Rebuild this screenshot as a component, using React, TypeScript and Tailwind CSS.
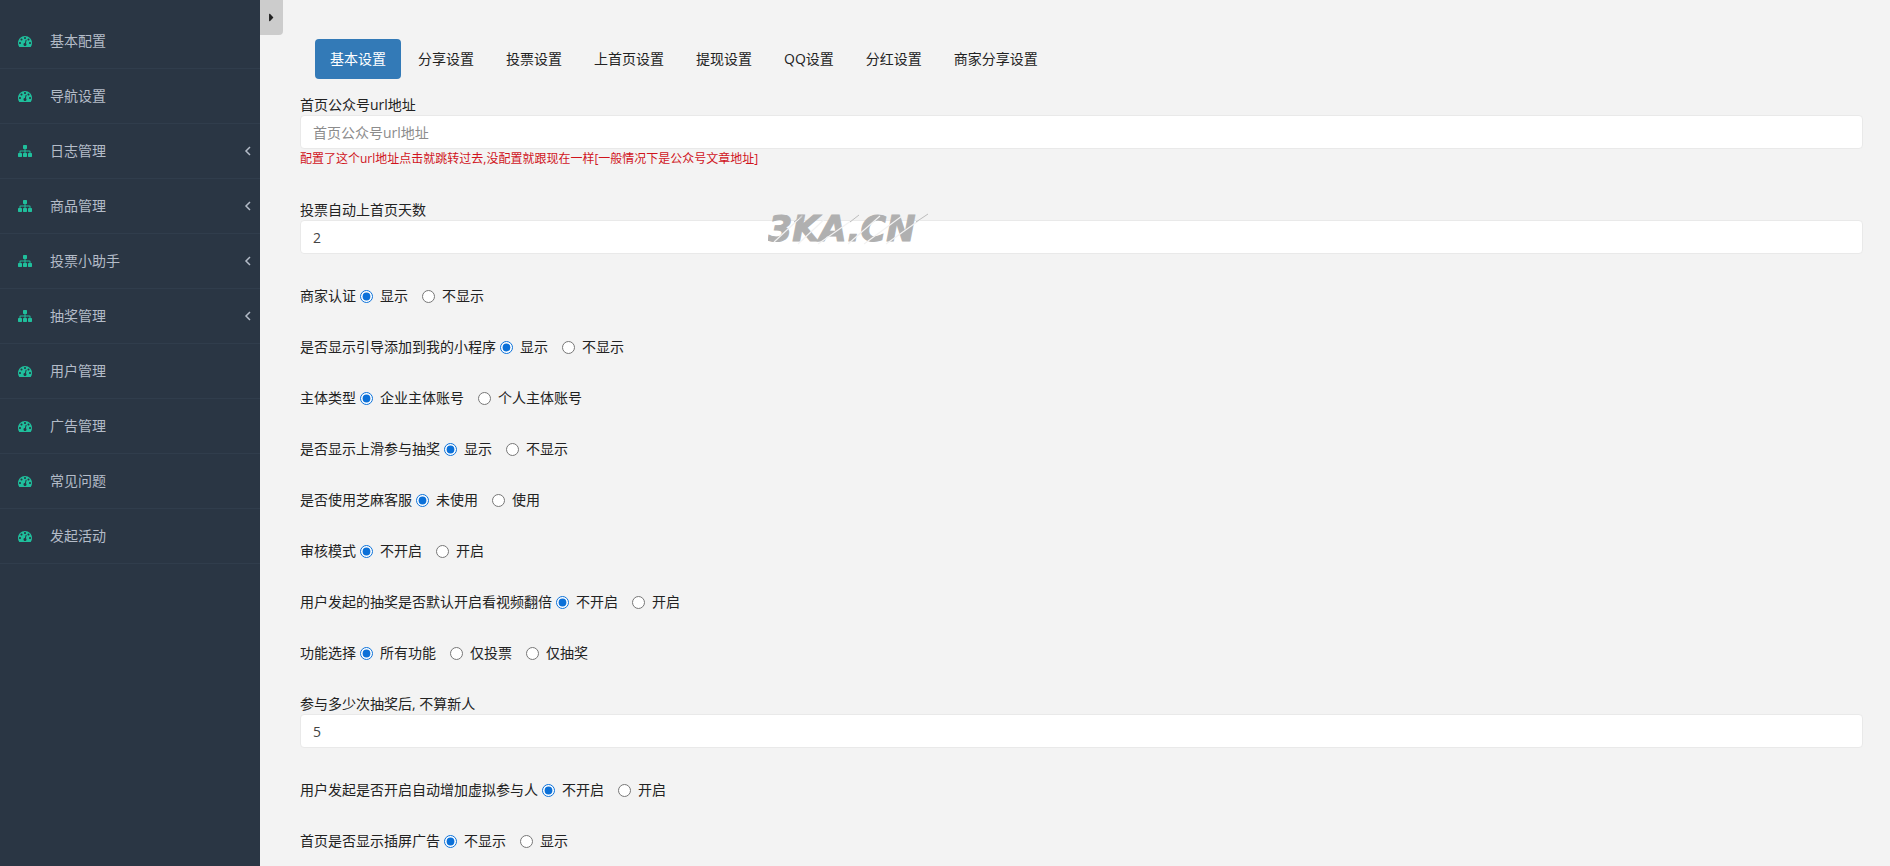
import { ReactNode, useState } from 'react';
import { FaCaretRight } from 'react-icons/fa';
import { clsx } from 'clsx';

type MenuItem = { label: string; children?: boolean };

const menu: MenuItem[] = [
  { label: '基本配置' },
  { label: '导航设置' },
  { label: '日志管理', children: true },
  { label: '商品管理', children: true },
  { label: '投票小助手', children: true },
  { label: '抽奖管理', children: true },
  { label: '用户管理' },
  { label: '广告管理' },
  { label: '常见问题' },
  { label: '发起活动' },
];

const tabs = ['基本设置', '分享设置', '投票设置', '上首页设置', '提现设置', 'QQ设置', '分红设置', '商家分享设置'];

function DashboardIcon() {
  return (
    <svg className="size-[14px] fill-[#1fbf9c]" viewBox="0 0 1792 1792" aria-hidden="true">
      <path d="M384 1152q0-53-37.5-90.5t-90.5-37.5-90.5 37.5-37.5 90.5 37.5 90.5 90.5 37.5 90.5-37.5 37.5-90.5zm192-448q0-53-37.5-90.5t-90.5-37.5-90.5 37.5-37.5 90.5 37.5 90.5 90.5 37.5 90.5-37.5 37.5-90.5zm428 481l101-382q6-26-7.5-48.5t-38.5-29.5-48 6.5-30 39.5l-101 382q-60 5-107 43.5t-63 98.5q-20 77 20 146t117 89 146-20 89-117q16-60-6-117t-72-91zm660-33q0-53-37.5-90.5t-90.5-37.5-90.5 37.5-37.5 90.5 37.5 90.5 90.5 37.5 90.5-37.5 37.5-90.5zm-640-640q0-53-37.5-90.5t-90.5-37.5-90.5 37.5-37.5 90.5 37.5 90.5 90.5 37.5 90.5-37.5 37.5-90.5zm448 192q0-53-37.5-90.5t-90.5-37.5-90.5 37.5-37.5 90.5 37.5 90.5 90.5 37.5 90.5-37.5 37.5-90.5zm320 448q0 261-141 483-19 29-54 29h-1402q-35 0-54-29-141-221-141-483 0-182 71-348t191-286 286-191 348-71 348 71 286 191 191 286 71 348z" />
    </svg>
  );
}

function SitemapIcon() {
  return (
    <svg className="size-[14px] fill-[#1fbf9c]" viewBox="0 0 1792 1792" aria-hidden="true">
      <path d="M1792 1248v320q0 40-28 68t-68 28h-320q-40 0-68-28t-28-68v-320q0-40 28-68t68-28h96v-192h-512v192h96q40 0 68 28t28 68v320q0 40-28 68t-68 28h-320q-40 0-68-28t-28-68v-320q0-40 28-68t68-28h96v-192h-512v192h96q40 0 68 28t28 68v320q0 40-28 68t-68 28h-320q-40 0-68-28t-28-68v-320q0-40 28-68t68-28h96v-192q0-52 38-90t90-38h512v-192h-96q-40 0-68-28t-28-68v-320q0-40 28-68t68-28h320q40 0 68 28t28 68v320q0 40-28 68t-68 28h-96v192h512q52 0 90 38t38 90v192h96q40 0 68 28t28 68z" />
    </svg>
  );
}

function AngleLeftIcon() {
  return (
    <svg className="h-3 w-2" viewBox="0 0 8 12" fill="none" aria-hidden="true">
      <path d="M6 2L2 6l4 4" stroke="currentColor" strokeWidth="1.5" />
    </svg>
  );
}

function Sidebar() {
  return (
    <aside className="w-[260px] shrink-0 bg-[#2a3644] pt-3.5">
      <nav>
        <ul>
          {menu.map((item) => (
            <li key={item.label} className="border-b border-[#303d4c]">
              <a href="#" className="flex h-[54px] items-center pl-[18px] pr-2 text-[#b4bcc8]">
                {item.children ? <SitemapIcon /> : <DashboardIcon />}
                <span className="ml-[18px] flex-1">{item.label}</span>
                {item.children && <AngleLeftIcon />}
              </a>
            </li>
          ))}
        </ul>
      </nav>
    </aside>
  );
}

function TextField({
  id,
  label,
  value,
  placeholder,
  help,
}: {
  id: string;
  label: string;
  value?: string;
  placeholder?: string;
  help?: ReactNode;
}) {
  return (
    <div className={clsx(!help && 'pb-px')}>
      <label htmlFor={id} className="block">{label}</label>
      <input
        id={id}
        type="text"
        defaultValue={value}
        placeholder={placeholder}
        className="block h-[34px] w-full rounded-sm border border-[#e9e9e9] bg-white px-3 text-[#444] placeholder:text-[#8c8c8c]"
      />
      {help && <p className="text-xs leading-5 text-[#d0141c]">{help}</p>}
    </div>
  );
}

function RadioField({ name, label, options }: { name: string; label: string; options: string[] }) {
  return (
    <fieldset className="flex items-center">
      <legend className="float-left">{label}</legend>
      <div className="ml-1 flex gap-3.5">
        {options.map((option, i) => (
          <label key={option} className="flex items-center gap-[7px]">
            <input type="radio" name={name} defaultChecked={i === 0} className="size-[13px] accent-[#0b70d8]" />
            {option}
          </label>
        ))}
      </div>
    </fieldset>
  );
}

function Watermark() {
  return (
    <svg
      className="pointer-events-none absolute left-[508px] top-[204px] h-[50px] w-[180px]"
      viewBox="0 0 180 50"
    >
      <text
        x="0"
        y="37"
        fill="#b0b0b0"
        stroke="#b0b0b0"
        fontSize="35"
        fontWeight="700"
        fontStyle="italic"
        fontFamily="DejaVu Sans"
      >
        3KA.CN
      </text>
      {/* slashes cut through the letters */}
      <path
        d="M6 38L34 12M30 40L60 12M50 40L90 12M80 40L112 12M96 40L134 12M118 40L160 10"
        stroke="#f2f2f2"
        strokeWidth="1.2"
      />
      <path d="M148 18L160 10M26 18L35 11M82 18L91 11" stroke="#bdbdbd" strokeWidth="1" />
    </svg>
  );
}

export default function App() {
  const [active, setActive] = useState(tabs[0]);

  return (
    <div className="flex min-h-screen bg-[#f3f3f3] font-['Open_Sans','Noto_Sans_CJK_SC',sans-serif] text-sm/5 text-[#222]">
      <Sidebar />
      <main className="relative min-w-0 flex-1">
        {/* sidebar collapse handle */}
        <button
          type="button"
          aria-label="收起菜单"
          className="absolute left-0 top-0 flex h-[35px] w-[23px] items-center justify-center rounded-br-sm bg-[#ccc]"
        >
          <FaCaretRight size={13} />
        </button>

        <div className="pb-[14px] pl-10 pr-[27px] pt-[39px]">
          <div className="flex gap-0.5 pl-[15px]">
            {tabs.map((tab) => (
              <button
                key={tab}
                type="button"
                onClick={() => setActive(tab)}
                className={clsx('h-10 rounded px-[15px]', active === tab && 'bg-[#337ab7] text-white')}
              >
                {tab}
              </button>
            ))}
          </div>

          <form className="mt-4 flex flex-col gap-[31px]">
            <TextField
              id="home-url"
              label="首页公众号url地址"
              placeholder="首页公众号url地址"
              help="配置了这个url地址点击就跳转过去,没配置就跟现在一样[一般情况下是公众号文章地址]"
            />
            <TextField id="home-days" label="投票自动上首页天数" value="2" />
            <RadioField name="merchant" label="商家认证" options={['显示', '不显示']} />
            <RadioField name="guide" label="是否显示引导添加到我的小程序" options={['显示', '不显示']} />
            <RadioField name="subject" label="主体类型" options={['企业主体账号', '个人主体账号']} />
            <RadioField name="swipe" label="是否显示上滑参与抽奖" options={['显示', '不显示']} />
            <RadioField name="service" label="是否使用芝麻客服" options={['未使用', '使用']} />
            <RadioField name="audit" label="审核模式" options={['不开启', '开启']} />
            <RadioField name="video" label="用户发起的抽奖是否默认开启看视频翻倍" options={['不开启', '开启']} />
            <RadioField name="feature" label="功能选择" options={['所有功能', '仅投票', '仅抽奖']} />
            <TextField id="new-user" label="参与多少次抽奖后, 不算新人" value="5" />
            <RadioField name="virtual" label="用户发起是否开启自动增加虚拟参与人" options={['不开启', '开启']} />
            <RadioField name="popup" label="首页是否显示插屏广告" options={['不显示', '显示']} />
          </form>
        </div>
        <Watermark />
      </main>
    </div>
  );
}
